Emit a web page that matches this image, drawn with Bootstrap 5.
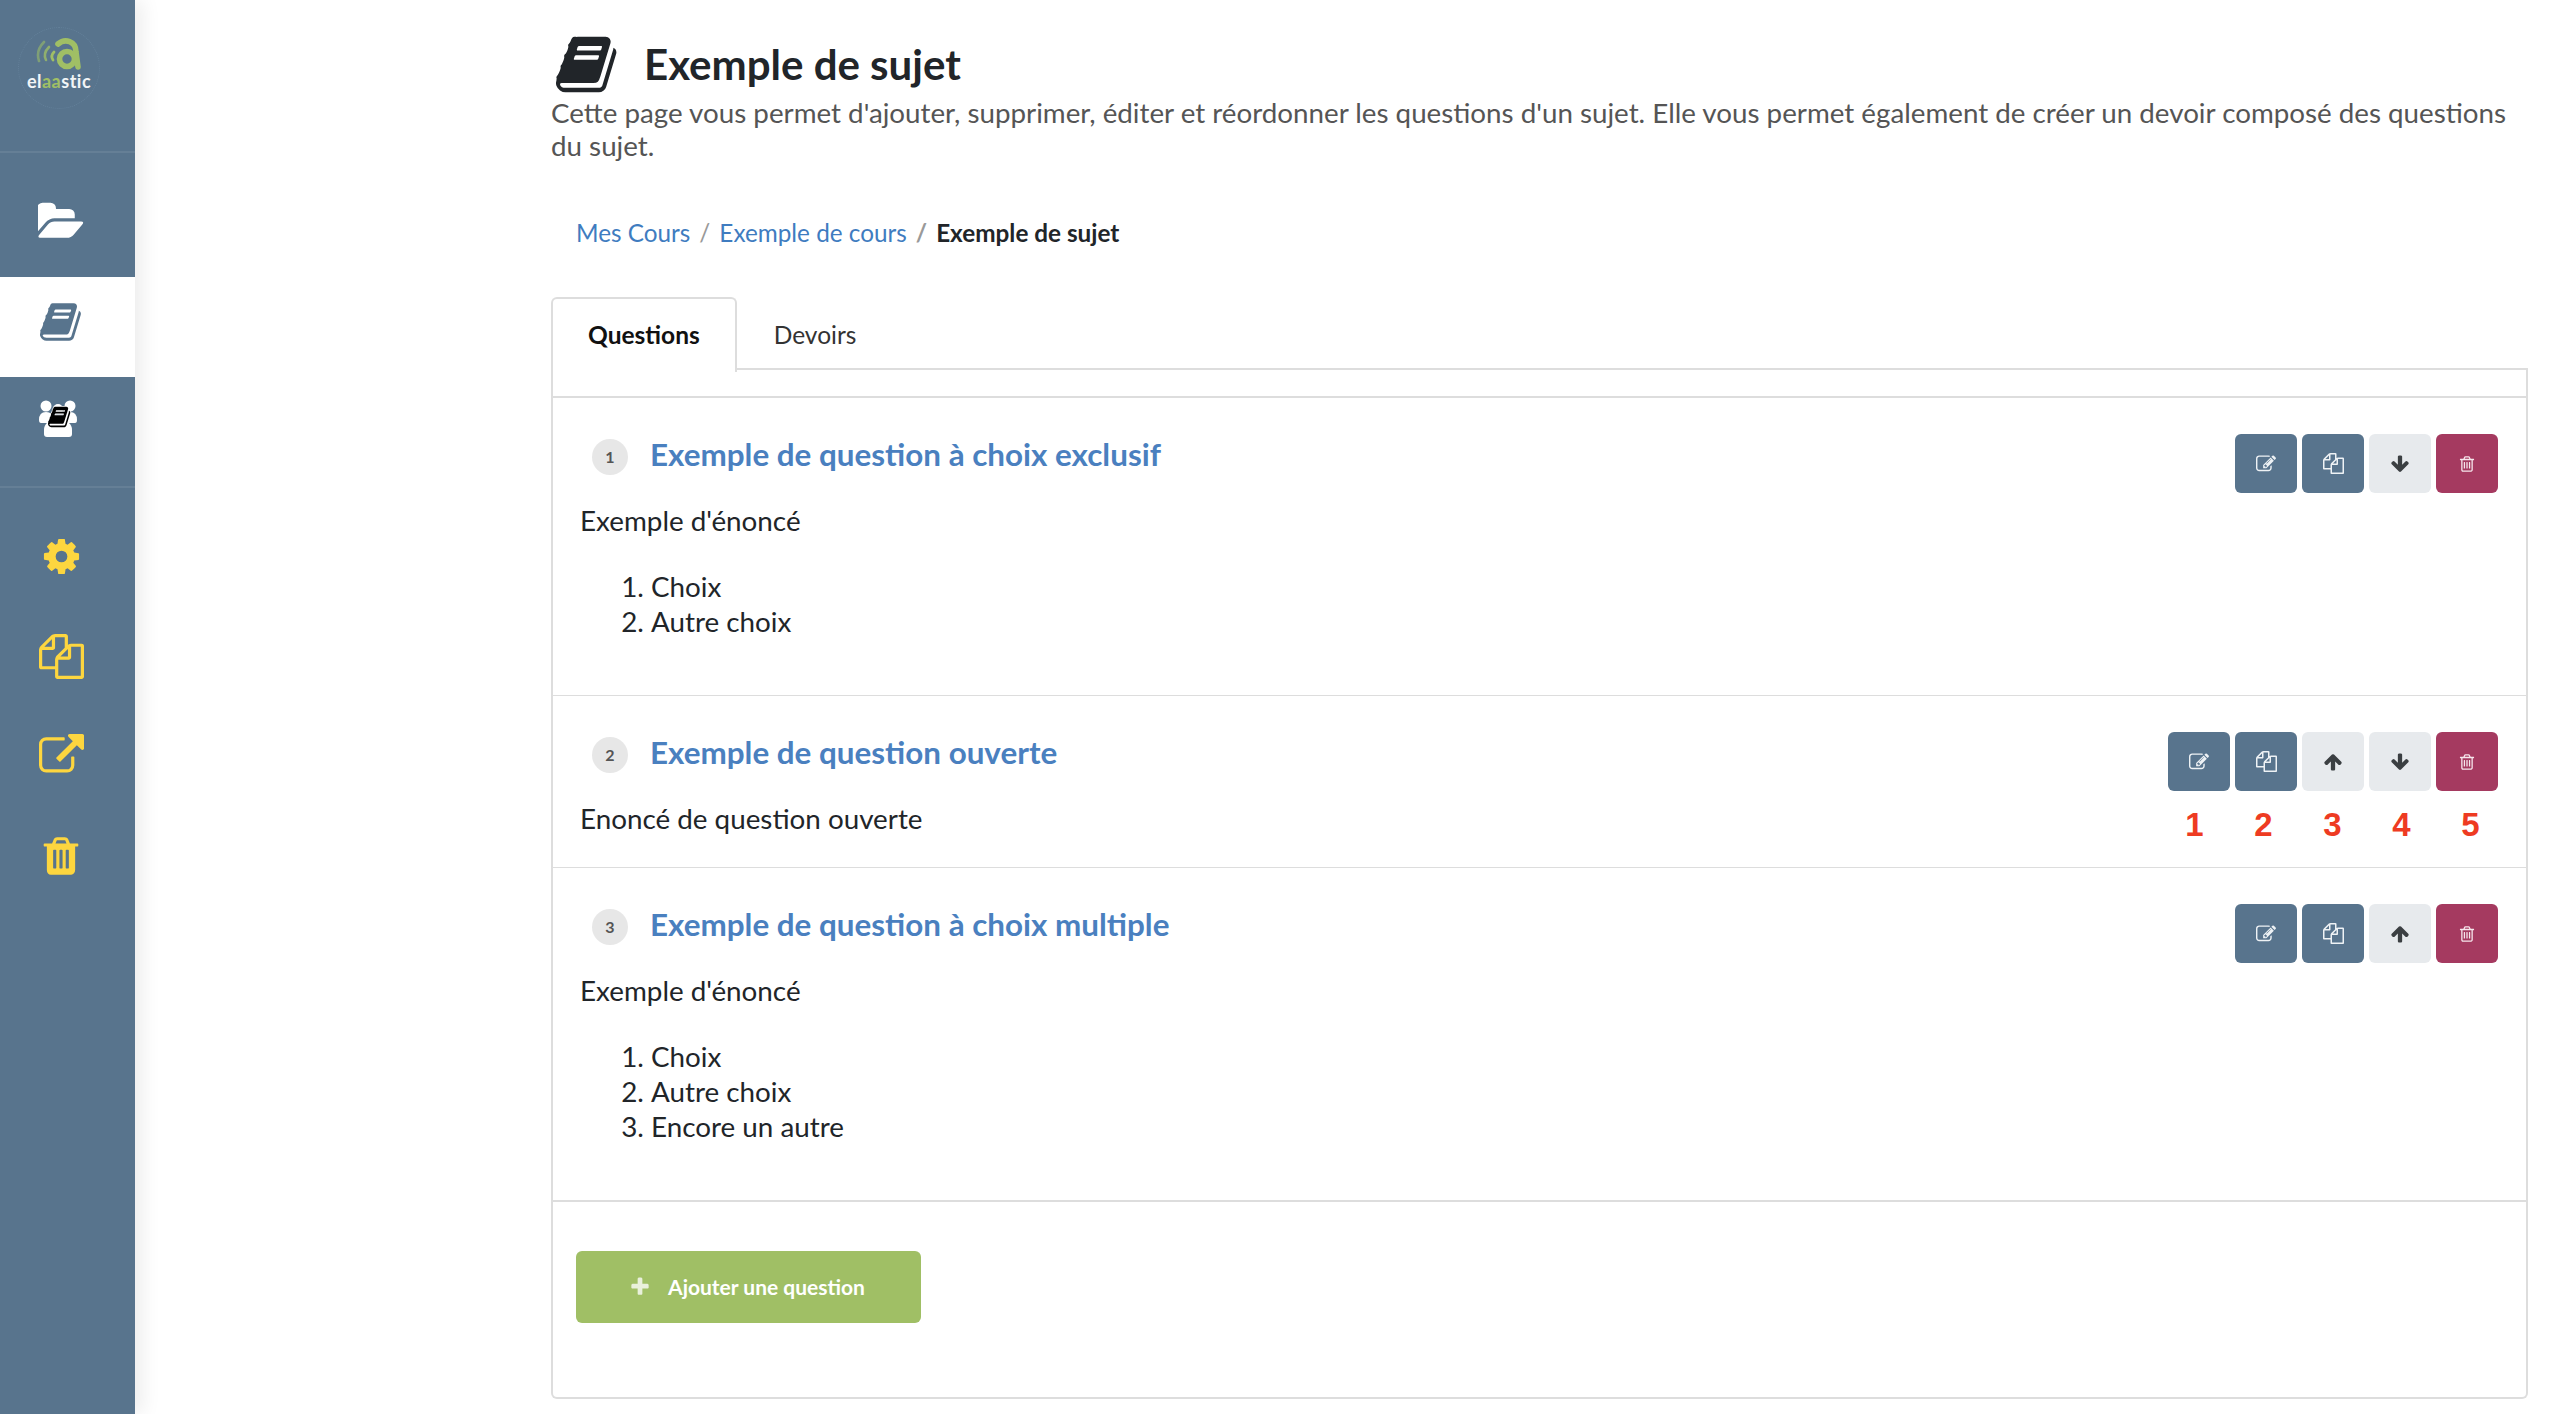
<!DOCTYPE html>
<html lang="fr">
<head>
<meta charset="utf-8">
<title>Exemple de sujet</title>
<link href="https://cdn.jsdelivr.net/npm/bootstrap@5.3.0/dist/css/bootstrap.min.css" rel="stylesheet">
<style>
html,body{height:100%}
body{font-family:"Lato","Liberation Sans",sans-serif;font-size:28px;color:#111;overflow:hidden;background:#fff}
.shell{height:1414px}
.rail{width:135px;flex:none;background:#58748d;box-shadow:8px 0 18px rgba(0,0,0,.07);position:relative;z-index:2}
.rail-logo{height:153px;border-bottom:2px solid #657f96;padding:38px 0 0 0;position:relative}
.logo-ring{position:absolute;left:18px;top:27px;width:82px;height:82px;border-radius:50%;border:1px dotted #64809a}
.logo-mark{display:block;margin-left:35px}
.logo-word{font-size:18px;line-height:20px;color:#f2f5f7;letter-spacing:.5px;font-weight:700;display:block;text-align:center;margin:0 17px 0 0;position:relative}
.logo-word span{color:#a0bf65}
.rail-item{display:flex;justify-content:center;padding-right:13px}
.rail-folder{height:124px;padding-top:47px}
.rail-book{height:100px;padding-top:23px;background:#fff;padding-right:11px}
.rail-team{height:111px;padding-top:23px;border-bottom:2px solid #657f96;padding-right:17px}
.rail-tool{height:99px}
.tool-gear{padding-top:48px;height:98px}
.tool-files{padding-top:48px}
.tool-ext{padding-top:49px}
.tool-bin{padding-top:50px}
.ico{fill:currentColor;display:block}
.content{padding:37px 26px 0 416px;min-width:0}
.page-head{height:54px;gap:23px;margin-left:5px}
.page-title{font-size:42px;font-weight:700;line-height:54px;margin:0;color:#212529}
.page-lead{font-size:27.75px;line-height:33px;color:#555;margin:5px 0 0;height:66px}
.crumbs{margin:55px 0 0;padding:0 0 0 25px;font-size:24.3px;line-height:31px}
.crumbs .breadcrumb-item+.breadcrumb-item{padding-left:9px}
.crumbs .breadcrumb-item+.breadcrumb-item::before{padding-right:9px;color:#999}
.crumbs a{color:#3f7cc0;text-decoration:none}
.crumbs .active{color:#212529;font-weight:700}
.tabs-row{margin-top:47px;border-bottom:2px solid #ddd;height:75px}
.tabs-row .nav-link{font-size:24.5px;line-height:31px;padding:22px 35px 20px;color:#333;border:2px solid transparent;border-bottom:0;height:75px;margin:0;border-radius:6px 6px 0 0}
.tabs-row .nav-link.active{font-weight:700;color:#111;border-color:#ddd;background:#fff;height:75px;position:relative;top:2px;padding-top:20px}
.tab-panel{border:2px solid #ddd;border-top:0;border-radius:0 0 6px 6px;padding-top:26px;height:1029px}
.q-list{border-top:2px solid #ddd;border-radius:0}
.q-item,.q-list .q-item:last-child{border:0;border-bottom:2px solid #ddd;border-radius:0}
.q-item{padding:34px 28px 0 27px;position:relative;display:flex;justify-content:space-between;align-items:flex-start}
.q-main{min-width:0}
.q-head{display:flex;align-items:center;margin-top:3px;height:38px;padding-left:12px}
.q-num{width:36px;height:36px;border-radius:50%;background:#e7e7e7;color:#555;font-size:16px;font-weight:700;display:flex;align-items:center;justify-content:center;margin-right:22px;flex:none;position:relative;top:3px}
.q-title{font-size:31.4px;font-weight:700;line-height:38px;color:#4a80bf;text-decoration:none}
.q-text{line-height:35px;margin:30px 0 28px;font-size:27.8px}
.q-text:last-child{margin-bottom:31px}
.q-opts{line-height:35px;margin:31px 0 56px;padding-left:71px;font-size:27.8px}
.q-tools{gap:5px;flex:none;margin-top:2px}
.tool-btn{width:62px;height:59px;padding:0;display:flex;align-items:center;justify-content:center;border-radius:6px;border:0}
.tool-blue,.tool-blue:hover{background:#58748d;color:#eef2f5}
.tool-grey,.tool-grey:hover{background:#e7eaed;color:#3b3f42}
.tool-red,.tool-red:hover{background:#a53a60;color:#f6e6ec}
.marks{position:absolute;top:111px;right:21px;display:flex;font-family:"Liberation Sans",Arial,sans-serif;font-weight:700;font-size:33px;line-height:36px;color:#ee3b22}
.marks span{width:69px;text-align:center}
.add-zone{padding:49px 0 0 23px}
.add-btn{width:345px;height:72px;background:#a0bf65;color:#fff;border:0;border-radius:6px;font-size:21px;font-weight:700;display:flex;align-items:center;justify-content:center;gap:17px;padding:0 3px 0 0}
.add-btn:hover{background:#a0bf65;color:#fff}
.add-btn .ico{color:#e9f0db}
</style>
</head>
<body>
<svg width="0" height="0" class="position-absolute">
<defs>
<symbol id="i-book" viewBox="0 0 1792 1792"><path d="M1639 478q40 57 18 129l-275 906q-19 64-76.5 107.5t-122.5 43.5h-923q-77 0-148.5-53.5t-99.5-131.5q-24-67-2-127 0-4 3-27t4-37q1-8-3-21.5t-3-19.5q2-11 8-21t16.5-23.5 16.5-23.5q23-38 45-91.5t30-91.5q3-10 .5-30t-.5-28q3-11 17-28t17-23q21-36 42-92t25-90q1-9-2.5-32t.5-28q4-13 22-30.5t22-22.5q19-26 42.5-84.5t27.5-96.5q1-8-3-25.5t-2-26.5q2-8 9-18t18-23 17-21q8-12 16.5-30.5t15-35 16-36 19.5-32 26.5-23.5 36-11.5 47.5 5.5l-1 3q38-9 51-9h761q74 0 114 56t18 130l-274 906q-36 119-71.5 153.5t-128.5 34.5h-869q-27 0-38 15-11 16-1 43 24 70 144 70h923q29 0 56-15.5t35-41.5l300-987q7-22 5-57 38 15 59 43zm-1064 2q-4 13 2 22.5t20 9.5h608q13 0 25.5-9.5t16.5-22.5l21-64q4-13-2-22.5t-20-9.5h-608q-13 0-25.5 9.5t-16.5 22.5zm-83 256q-4 13 2 22.5t20 9.5h608q13 0 25.5-9.5t16.5-22.5l21-64q4-13-2-22.5t-20-9.5h-608q-13 0-25.5 9.5t-16.5 22.5z"/></symbol>
<symbol id="i-folder" viewBox="0 0 1920 1792"><path d="M1845 931q0 35-53 92l-336 396q-43 51-120.5 86.5t-143.5 35.5h-1088q-34 0-60.5-13t-26.5-43q0-35 53-92l336-396q43-51 120.5-86.5t143.5-35.5h1088q34 0 60.5 13t26.5 43zm-343-344v160h-832q-94 0-197 47.5t-164 119.5l-337 396-5 6q0-4-.5-12.5t-.5-12.5v-960q0-92 66-158t158-66h320q92 0 158 66t66 158v32h544q92 0 158 66t66 158z"/></symbol>
<symbol id="i-cog" viewBox="0 0 1792 1792"><path d="M1152 896q0-106-75-181t-181-75-181 75-75 181 75 181 181 75 181-75 75-181zm512-109v222q0 12-8 23t-20 13l-185 28q-19 54-39 91 35 50 107 138 10 12 10 25t-9 23q-27 37-99 108t-94 71q-12 0-26-9l-138-108q-44 23-91 38-16 136-29 186-7 28-36 28h-222q-14 0-24.5-8.5t-11.5-21.5l-28-184q-49-16-90-37l-141 107q-10 9-25 9-14 0-25-11-126-114-165-168-7-10-7-23 0-12 8-23 15-21 51-66.5t54-70.5q-27-50-41-99l-183-27q-13-2-21-12.5t-8-23.5v-222q0-12 8-23t19-13l186-28q14-46 39-92-40-57-107-138-10-12-10-24 0-10 9-23 26-36 98.5-107.5t94.5-71.5q13 0 26 10l138 107q44-23 91-38 16-136 29-186 7-28 36-28h222q14 0 24.5 8.5t11.5 21.5l28 184q49 16 90 37l142-107q9-9 24-9 13 0 25 10 129 119 165 170 7 8 7 22 0 12-8 23-15 21-51 66.5t-54 70.5q26 50 41 98l183 28q13 2 21 12.5t8 23.5z"/></symbol>
<symbol id="i-files" viewBox="0 0 1792 1792"><path d="M1696 384q40 0 68 28t28 68v1216q0 40-28 68t-68 28h-960q-40 0-68-28t-28-68v-288h-544q-40 0-68-28t-28-68v-672q0-40 20-88t48-76l408-408q28-28 76-48t88-20h416q40 0 68 28t28 68v328q68-40 128-40h416zm-544 213l-299 299h299v-299zm-640-384l-299 299h299v-299zm196 647l316-316v-416h-384v416q0 40-28 68t-68 28h-416v640h512v-256q0-40 20-88t48-76zm956 804v-1152h-384v416q0 40-28 68t-68 28h-416v640h896z"/></symbol>
<symbol id="i-ext" viewBox="0 0 1792 1792"><path d="M1408 928v320q0 119-84.5 203.5t-203.5 84.5h-832q-119 0-203.5-84.5t-84.5-203.5v-832q0-119 84.5-203.5t203.5-84.5h704q14 0 23 9t9 23v64q0 14-9 23t-23 9h-704q-66 0-113 47t-47 113v832q0 66 47 113t113 47h832q66 0 113-47t47-113v-320q0-14 9-23t23-9h64q14 0 23 9t9 23zm384-864v512q0 26-19 45t-45 19-45-19l-176-176-652 652q-10 10-23 10t-23-10l-114-114q-10-10-10-23t10-23l652-652-176-176q-19-19-19-45t19-45 45-19h512q26 0 45 19t19 45z"/></symbol>
<symbol id="i-trash" viewBox="0 0 1792 1792"><path d="M704 1376v-704q0-14-9-23t-23-9h-64q-14 0-23 9t-9 23v704q0 14 9 23t23 9h64q14 0 23-9t9-23zm256 0v-704q0-14-9-23t-23-9h-64q-14 0-23 9t-9 23v704q0 14 9 23t23 9h64q14 0 23-9t9-23zm256 0v-704q0-14-9-23t-23-9h-64q-14 0-23 9t-9 23v704q0 14 9 23t23 9h64q14 0 23-9t9-23zm-544-992h448l-48-117q-7-9-17-11h-317q-10 2-17 11zm928 32v64q0 14-9 23t-23 9h-96v948q0 83-47 143.5t-113 60.5h-832q-66 0-113-58.5t-47-141.5v-952h-96q-14 0-23-9t-9-23v-64q0-14 9-23t23-9h309l70-167q15-37 54-63t79-26h320q40 0 79 26t54 63l70 167h309q14 0 23 9t9 23z"/></symbol>
<symbol id="i-trasho" viewBox="0 0 1792 1792"><path d="M704 736v576q0 14-9 23t-23 9h-64q-14 0-23-9t-9-23v-576q0-14 9-23t23-9h64q14 0 23 9t9 23zm256 0v576q0 14-9 23t-23 9h-64q-14 0-23-9t-9-23v-576q0-14 9-23t23-9h64q14 0 23 9t9 23zm256 0v576q0 14-9 23t-23 9h-64q-14 0-23-9t-9-23v-576q0-14 9-23t23-9h64q14 0 23 9t9 23zm128 724v-948h-896v948q0 22 7 40.5t14.5 27 10.5 8.5h832q3 0 10.5-8.5t14.5-27 7-40.5zm-672-1076h448l-48-117q-7-9-17-11h-317q-10 2-17 11zm928 32v64q0 14-9 23t-23 9h-96v948q0 83-47 143.5t-113 60.5h-832q-66 0-113-58.5t-47-141.5v-952h-96q-14 0-23-9t-9-23v-64q0-14 9-23t23-9h309l70-167q15-37 54-63t79-26h320q40 0 79 26t54 63l70 167h309q14 0 23 9t9 23z"/></symbol>
<symbol id="i-edit" viewBox="0 0 1792 1792"><path d="M888 1184l116-116-152-152-116 116v56h96v96h56zm440-720q-16-16-33 1l-350 350q-17 17-1 33t33-1l350-350q17-17 1-33zm80 594v190q0 119-84.5 203.5t-203.5 84.5h-832q-119 0-203.5-84.5t-84.5-203.5v-832q0-119 84.5-203.5t203.5-84.5h832q63 0 117 25 15 7 18 23 3 17-9 29l-49 49q-14 14-32 8-23-6-45-6h-832q-66 0-113 47t-47 113v832q0 66 47 113t113 47h832q66 0 113-47t47-113v-126q0-13 9-22l64-64q15-15 35-7t20 29zm-96-738l288 288-672 672h-288v-288zm444 132l-92 92-288-288 92-92q28-28 68-28t68 28l152 152q28 28 28 68t-28 68z"/></symbol>
<symbol id="i-up" viewBox="0 0 1792 1792"><path d="M1675 971q0 51-37 90l-75 75q-38 38-91 38-54 0-90-38l-294-293v704q0 52-37.5 84.5t-90.5 32.5h-128q-53 0-90.5-32.5t-37.5-84.5v-704l-294 293q-36 38-90 38t-90-38l-75-75q-38-38-38-90 0-53 38-91l651-651q35-37 90-37 54 0 91 37l651 651q37 39 37 91z"/></symbol>
<symbol id="i-down" viewBox="0 0 1792 1792"><path d="M1675 832q0 53-37 90l-651 652q-39 37-91 37-53 0-90-37l-651-652q-38-36-38-90 0-53 38-91l74-75q39-37 91-37 53 0 90 37l294 294v-704q0-52 38-90t90-38h128q52 0 90 38t38 90v704l294-294q37-37 90-37 52 0 91 37l75 75q37 39 37 91z"/></symbol>
<symbol id="i-plus" viewBox="0 0 1792 1792"><path d="M1600 736v192q0 40-28 68t-68 28h-416v416q0 40-28 68t-68 28h-192q-40 0-68-28t-28-68v-416h-416q-40 0-68-28t-28-68v-192q0-40 28-68t68-28h416v-416q0-40 28-68t68-28h192q40 0 68 28t28 68v416h416q40 0 68 28t28 68z"/></symbol>
</defs>
</svg>

<div class="shell d-flex">
  <nav class="rail d-flex flex-column">
    <div class="rail-logo">
      <span class="logo-ring"></span>
      <svg class="logo-mark" width="46" height="33" viewBox="0 0 46 33" aria-hidden="true">
        <g fill="none" stroke-linecap="round">
          <path d="M9 4 C3 10 2 17 4 23" stroke="#7f9f76" stroke-width="2.6"/>
          <path d="M14 9 C10 13 9 18 11 22" stroke="#8fae6e" stroke-width="2.6"/>
          <path d="M19 14 C17 16 16 19 18 22" stroke="#a0bf65" stroke-width="2.8"/>
          <circle cx="32" cy="21" r="7.5" stroke="#a0bf65" stroke-width="5.6"/>
          <path d="M23 6 C30 0 41 3 41 14 L43 29" stroke="#a0bf65" stroke-width="5.6"/>
        </g>
      </svg>
      <span class="logo-word">el<span>aa</span>stic</span>
    </div>
    <a class="rail-item rail-folder text-white" href="#"><svg class="ico" width="47" height="44"><use href="#i-folder"/></svg></a>
    <a class="rail-item rail-book" href="#" style="color:#58748d"><svg class="ico" width="44" height="44"><use href="#i-book"/></svg></a>
    <a class="rail-item rail-team" href="#">
      <svg width="42" height="40" viewBox="0 0 42 40" aria-hidden="true">
        <g fill="#fff">
          <circle cx="8" cy="6" r="5.5"/><circle cx="32" cy="6" r="5.5"/><circle cx="20" cy="9" r="5"/>
          <path d="M1 20 Q1 12 8 12 Q15 12 15 20 L15 23 H3 Q1 23 1 20Z"/>
          <path d="M25 20 Q25 12 32 12 Q39 12 39 20 Q39 23 37 23 H25Z"/>
          <path d="M6 30 Q6 20 20 20 Q34 20 34 30 V34 Q34 37 31 37 H9 Q6 37 6 34Z"/>
        </g>
        <svg x="10" y="5" width="24" height="24"><use href="#i-book" fill="#fff" stroke="#fff" stroke-width="100"/><use href="#i-book" fill="#000"/></svg>
      </svg>
    </a>
    <a class="rail-item rail-tool tool-gear" href="#" style="color:#fdd63f"><svg class="ico" width="41" height="41"><use href="#i-cog"/></svg></a>
    <a class="rail-item rail-tool tool-files" href="#" style="color:#fdd63f"><svg class="ico" width="45" height="45"><use href="#i-files"/></svg></a>
    <a class="rail-item rail-tool tool-ext" href="#" style="color:#fdd63f"><svg class="ico" width="45" height="45"><use href="#i-ext"/></svg></a>
    <a class="rail-item rail-tool tool-bin" href="#" style="color:#fdd63f"><svg class="ico" width="44" height="44"><use href="#i-trash"/></svg></a>
  </nav>

  <main class="content flex-grow-1">
    <div class="page-head d-flex align-items-center">
      <svg class="ico" width="65" height="65" style="color:#212529"><use href="#i-book"/></svg>
      <h1 class="page-title">Exemple de sujet</h1>
    </div>
    <p class="page-lead">Cette page vous permet d'ajouter, supprimer, éditer et réordonner les questions d'un sujet. Elle vous permet également de créer un devoir composé des questions du sujet.</p>

    <ol class="breadcrumb crumbs">
      <li class="breadcrumb-item"><a href="#">Mes Cours</a></li>
      <li class="breadcrumb-item"><a href="#">Exemple de cours</a></li>
      <li class="breadcrumb-item active" aria-current="page">Exemple de sujet</li>
    </ol>

    <ul class="nav nav-tabs tabs-row">
      <li class="nav-item"><a class="nav-link active" href="#">Questions</a></li>
      <li class="nav-item"><a class="nav-link" href="#">Devoirs</a></li>
    </ul>

    <div class="tab-panel">
      <div class="list-group list-group-flush q-list">
        <div class="list-group-item q-item">
          <div class="q-main">
            <div class="q-head"><span class="q-num">1</span><a class="q-title" href="#">Exemple de question à choix exclusif</a></div>
            <p class="q-text">Exemple d'énoncé</p>
            <ol class="q-opts"><li>Choix</li><li>Autre choix</li></ol>
          </div>
          <div class="q-tools d-flex">
            <button class="btn tool-btn tool-blue"><svg class="ico" width="20" height="20"><use href="#i-edit"/></svg></button>
            <button class="btn tool-btn tool-blue"><svg class="ico" width="21" height="21"><use href="#i-files"/></svg></button>
            <button class="btn tool-btn tool-grey"><svg class="ico" width="20" height="20"><use href="#i-down"/></svg></button>
            <button class="btn tool-btn tool-red"><svg class="ico" width="18" height="18"><use href="#i-trasho"/></svg></button>
          </div>
        </div>
        <div class="list-group-item q-item">
          <div class="q-main">
            <div class="q-head"><span class="q-num">2</span><a class="q-title" href="#">Exemple de question ouverte</a></div>
            <p class="q-text">Enoncé de question ouverte</p>
          </div>
          <div class="q-tools d-flex">
            <button class="btn tool-btn tool-blue"><svg class="ico" width="20" height="20"><use href="#i-edit"/></svg></button>
            <button class="btn tool-btn tool-blue"><svg class="ico" width="21" height="21"><use href="#i-files"/></svg></button>
            <button class="btn tool-btn tool-grey"><svg class="ico" width="20" height="20"><use href="#i-up"/></svg></button>
            <button class="btn tool-btn tool-grey"><svg class="ico" width="20" height="20"><use href="#i-down"/></svg></button>
            <button class="btn tool-btn tool-red"><svg class="ico" width="18" height="18"><use href="#i-trasho"/></svg></button>
          </div>
          <div class="marks"><span>1</span><span>2</span><span>3</span><span>4</span><span>5</span></div>
        </div>
        <div class="list-group-item q-item">
          <div class="q-main">
            <div class="q-head"><span class="q-num">3</span><a class="q-title" href="#">Exemple de question à choix multiple</a></div>
            <p class="q-text">Exemple d'énoncé</p>
            <ol class="q-opts"><li>Choix</li><li>Autre choix</li><li>Encore un autre</li></ol>
          </div>
          <div class="q-tools d-flex">
            <button class="btn tool-btn tool-blue"><svg class="ico" width="20" height="20"><use href="#i-edit"/></svg></button>
            <button class="btn tool-btn tool-blue"><svg class="ico" width="21" height="21"><use href="#i-files"/></svg></button>
            <button class="btn tool-btn tool-grey"><svg class="ico" width="20" height="20"><use href="#i-up"/></svg></button>
            <button class="btn tool-btn tool-red"><svg class="ico" width="18" height="18"><use href="#i-trasho"/></svg></button>
          </div>
        </div>
      </div>
      <div class="add-zone">
        <button class="btn add-btn"><svg class="ico" width="22" height="22"><use href="#i-plus"/></svg><span>Ajouter une question</span></button>
      </div>
    </div>
  </main>
</div>
<script src="https://cdn.jsdelivr.net/npm/bootstrap@5.3.0/dist/js/bootstrap.bundle.min.js"></script>
</body>
</html>
